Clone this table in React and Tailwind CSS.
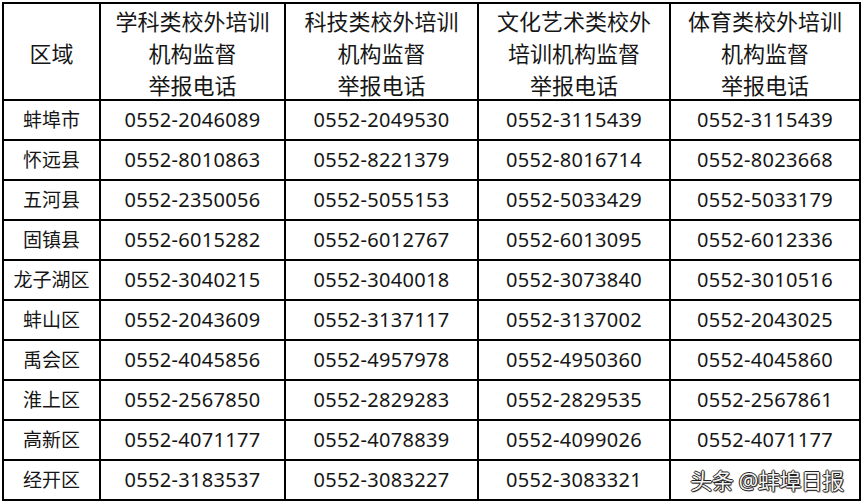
import React from 'react';

const headers = [
  ['区域'],
  ['学科类校外培训', '机构监督', '举报电话'],
  ['科技类校外培训', '机构监督', '举报电话'],
  ['文化艺术类校外', '培训机构监督', '举报电话'],
  ['体育类校外培训', '机构监督', '举报电话'],
];

const rows = [
  ['蚌埠市', '0552-2046089', '0552-2049530', '0552-3115439', '0552-3115439'],
  ['怀远县', '0552-8010863', '0552-8221379', '0552-8016714', '0552-8023668'],
  ['五河县', '0552-2350056', '0552-5055153', '0552-5033429', '0552-5033179'],
  ['固镇县', '0552-6015282', '0552-6012767', '0552-6013095', '0552-6012336'],
  ['龙子湖区', '0552-3040215', '0552-3040018', '0552-3073840', '0552-3010516'],
  ['蚌山区', '0552-2043609', '0552-3137117', '0552-3137002', '0552-2043025'],
  ['禹会区', '0552-4045856', '0552-4957978', '0552-4950360', '0552-4045860'],
  ['淮上区', '0552-2567850', '0552-2829283', '0552-2829535', '0552-2567861'],
  ['高新区', '0552-4071177', '0552-4078839', '0552-4099026', '0552-4071177'],
  ['经开区', '0552-3183537', '0552-3083227', '0552-3083321', null],
];

export default function App() {
  return (
    <div className="w-[862px] h-[502px] bg-white pl-[2px] pt-[2px] text-[#161616]"
      style={{ fontFamily: '"Noto Sans", "Noto Sans CJK SC", sans-serif' }}>
      <div className="grid grid-cols-[95px_183px_191px_190px_188px] grid-rows-[95px_repeat(10,38px)] gap-[2px] p-[2px] bg-black w-fit">
        {headers.map((h, i) => (
          <div key={i} className="bg-white flex flex-col items-center justify-center text-[22px] leading-[32px] pt-[2px]">
            {h.map((line) => <span key={line}>{line}</span>)}
          </div>
        ))}
        {rows.map((r) =>
          r.map((cell, j) => (
            <div key={r[0] + j}
              className={`bg-white flex items-center justify-center ${j === 0 ? 'text-[19px]' : 'text-[20px] tracking-[0.3px]'}`}>
              {cell === null ? (
                <span className="text-[22px] text-[#f4f4f4] tracking-[-0.5px] pl-[4px]"
                  style={{ textShadow: '-1px 0 0 #222, 1px 0 0 #222, 0 -1px 0 #222, 0 1px 0 #222, 1px 1px 1px #555' }}>
                  头条 @蚌埠日报
                </span>
              ) : cell}
            </div>
          ))
        )}
      </div>
    </div>
  );
}
